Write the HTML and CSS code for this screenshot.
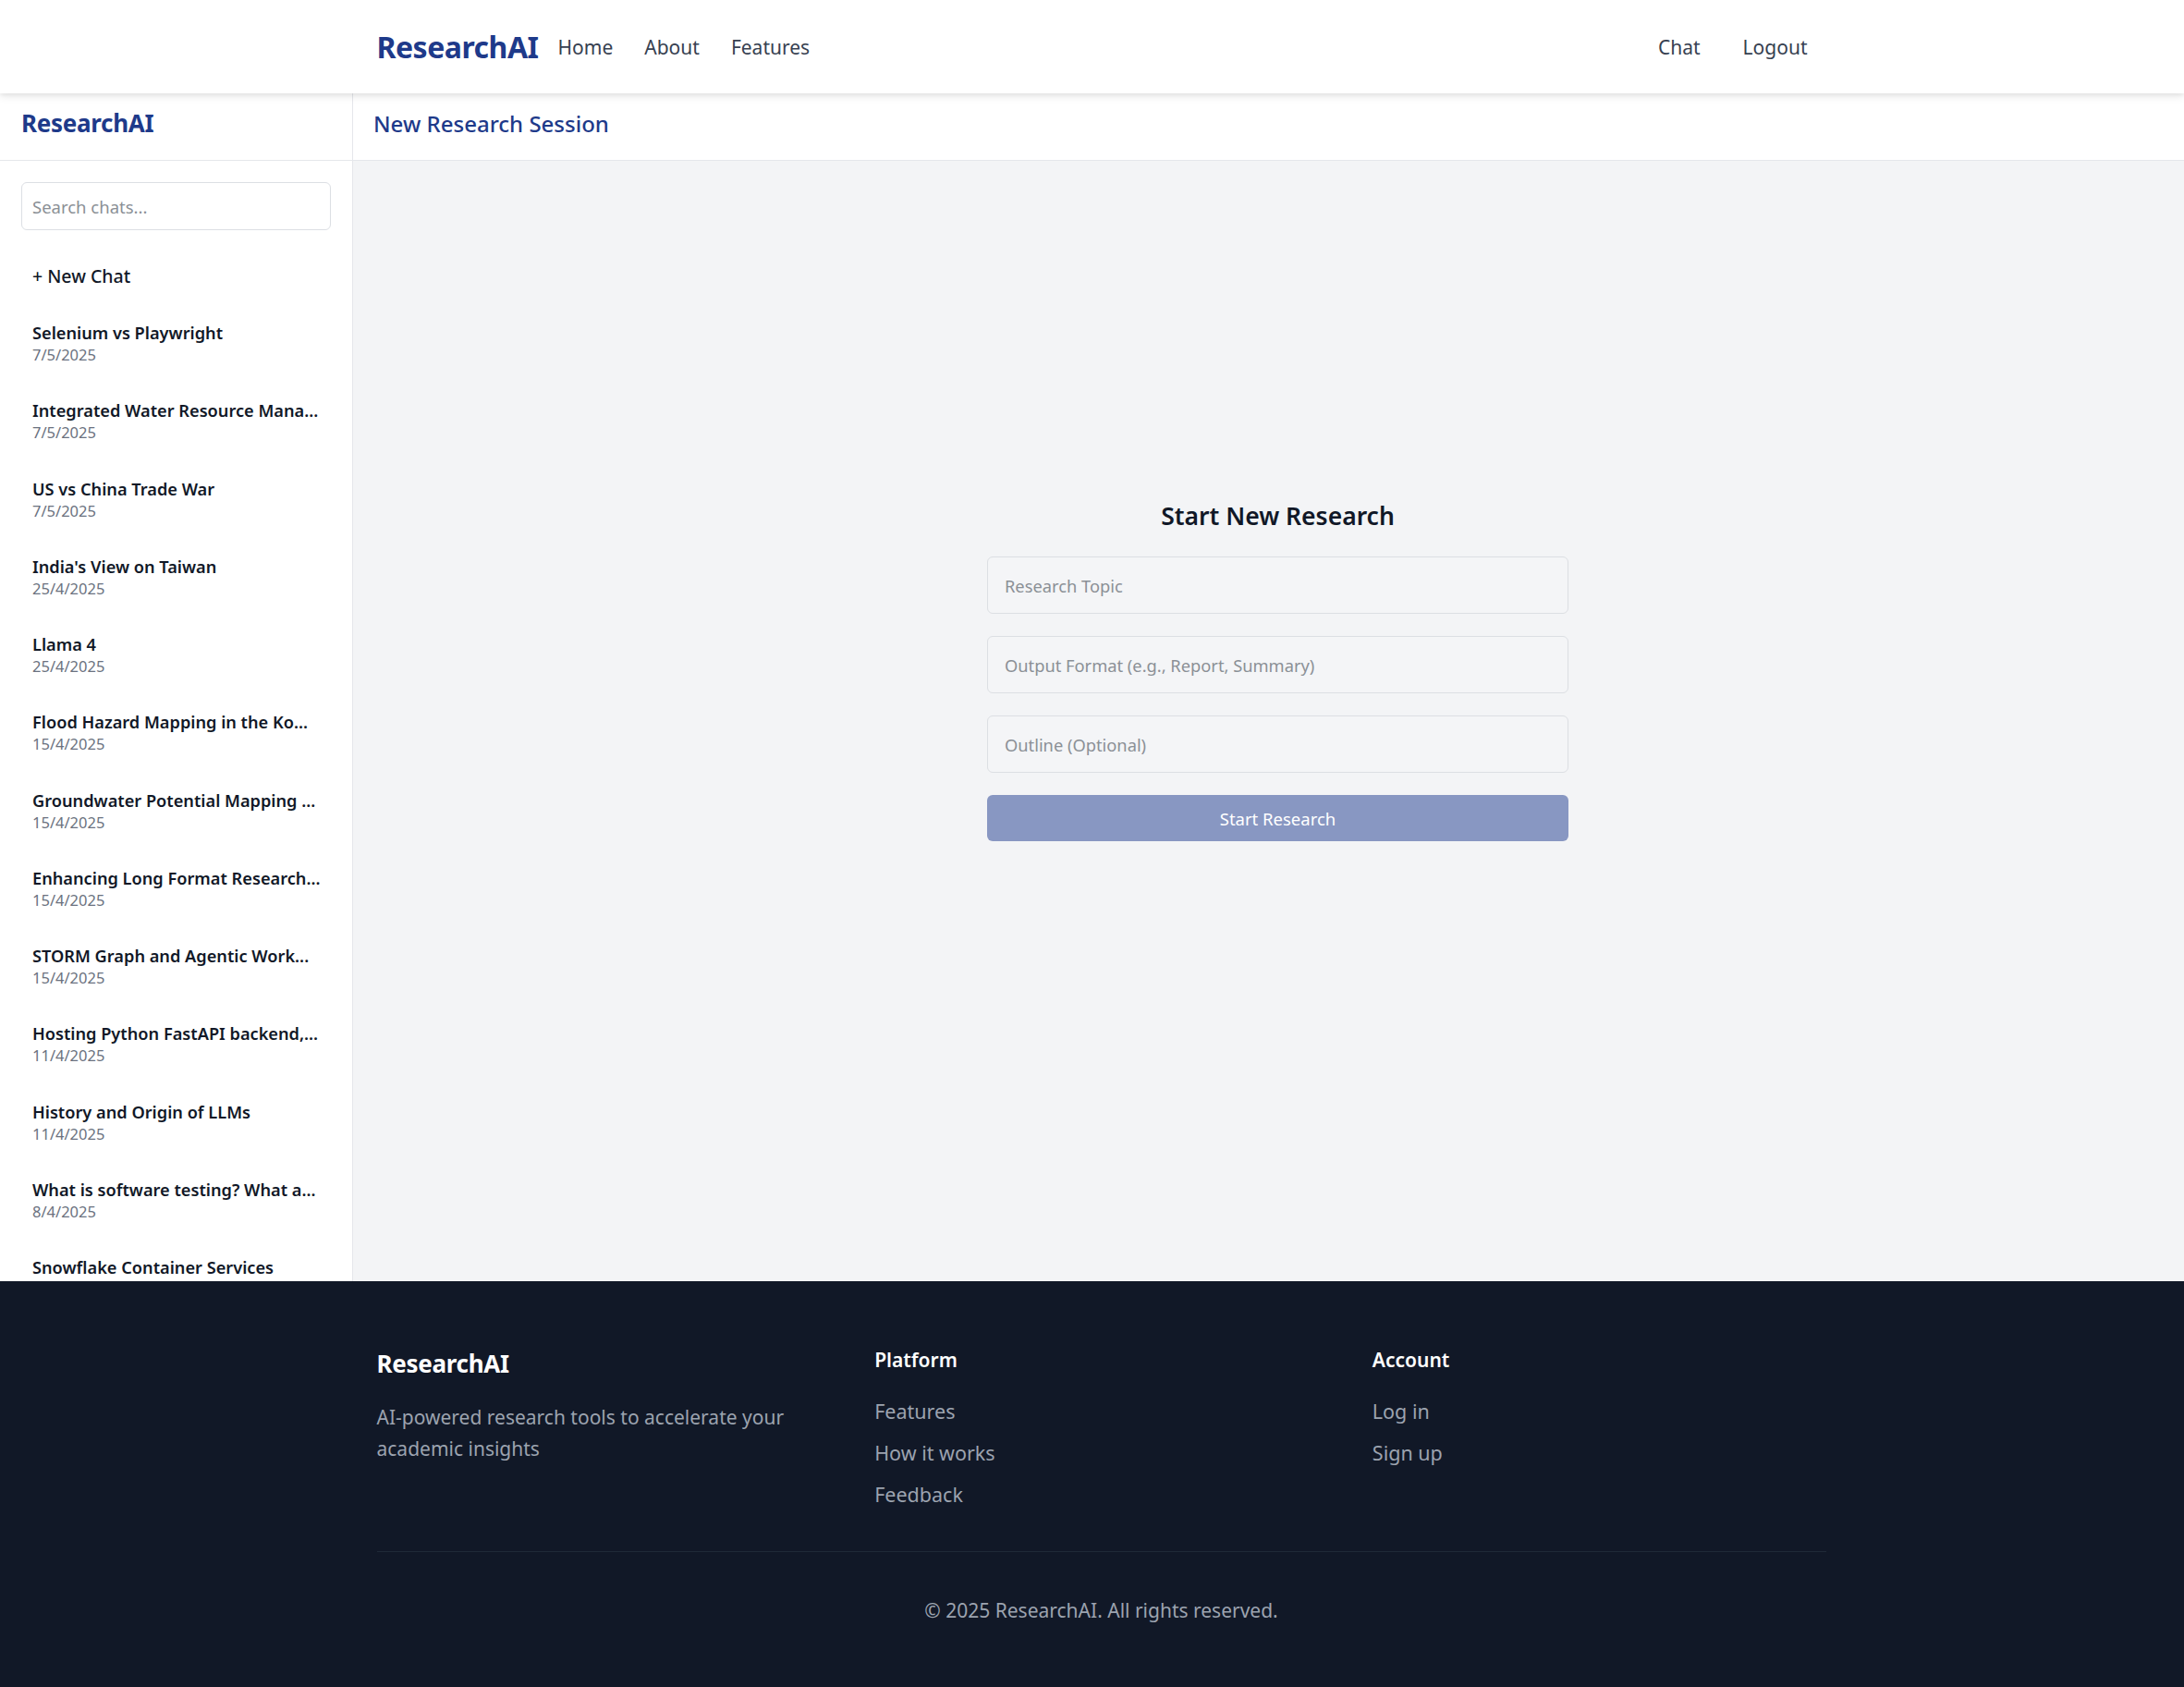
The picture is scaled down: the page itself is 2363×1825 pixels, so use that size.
FILE: index.html
```html
<!DOCTYPE html>
<html lang="en">
<head>
<meta charset="utf-8">
<title>ResearchAI</title>
<link rel="stylesheet" href="styles.css">
</head>
<body>
<nav class="topnav">
  <div class="container topnav-inner">
    <div class="nav-left">
      <a class="brand" href="#">ResearchAI</a>
      <a class="nav-link" href="#">Home</a>
      <a class="nav-link" href="#">About</a>
      <a class="nav-link" href="#">Features</a>
    </div>
    <div class="nav-right">
      <a class="nav-link" href="#">Chat</a>
      <a class="nav-link" href="#">Logout</a>
    </div>
  </div>
</nav>

<div class="app">
  <aside class="sidebar">
    <div class="sidebar-head"><span class="sidebar-brand">ResearchAI</span></div>
    <div class="sidebar-body">
      <input class="search" type="text" placeholder="Search chats...">
      <button class="new-chat" type="button">+ New Chat</button>
      <ul class="chat-list">
        <li class="chat-item"><div class="chat-title">Selenium vs Playwright</div><div class="chat-date">7/5/2025</div></li>
        <li class="chat-item"><div class="chat-title">Integrated Water Resource Mana...</div><div class="chat-date">7/5/2025</div></li>
        <li class="chat-item"><div class="chat-title">US vs China Trade War</div><div class="chat-date">7/5/2025</div></li>
        <li class="chat-item"><div class="chat-title">India's View on Taiwan</div><div class="chat-date">25/4/2025</div></li>
        <li class="chat-item"><div class="chat-title">Llama 4</div><div class="chat-date">25/4/2025</div></li>
        <li class="chat-item"><div class="chat-title">Flood Hazard Mapping in the Ko...</div><div class="chat-date">15/4/2025</div></li>
        <li class="chat-item"><div class="chat-title">Groundwater Potential Mapping ...</div><div class="chat-date">15/4/2025</div></li>
        <li class="chat-item"><div class="chat-title">Enhancing Long Format Research...</div><div class="chat-date">15/4/2025</div></li>
        <li class="chat-item"><div class="chat-title">STORM Graph and Agentic Work...</div><div class="chat-date">15/4/2025</div></li>
        <li class="chat-item"><div class="chat-title">Hosting Python FastAPI backend,...</div><div class="chat-date">11/4/2025</div></li>
        <li class="chat-item"><div class="chat-title">History and Origin of LLMs</div><div class="chat-date">11/4/2025</div></li>
        <li class="chat-item"><div class="chat-title">What is software testing? What a...</div><div class="chat-date">8/4/2025</div></li>
        <li class="chat-item"><div class="chat-title">Snowflake Container Services</div></li>
      </ul>
    </div>
  </aside>

  <main class="main">
    <header class="main-head">New Research Session</header>
    <div class="main-body">
      <form class="research-form">
        <h2 class="form-title">Start New Research</h2>
        <input class="field" type="text" placeholder="Research Topic">
        <input class="field" type="text" placeholder="Output Format (e.g., Report, Summary)">
        <input class="field" type="text" placeholder="Outline (Optional)">
        <button class="submit" type="button">Start Research</button>
      </form>
    </div>
  </main>
</div>

<footer class="footer">
  <div class="container">
    <div class="footer-grid">
      <div class="footer-col">
        <div class="footer-brand">ResearchAI</div>
        <p class="footer-desc">AI-powered research tools to accelerate your academic insights</p>
      </div>
      <div class="footer-col">
        <div class="footer-heading">Platform</div>
        <ul class="footer-links">
          <li>Features</li>
          <li>How it works</li>
          <li>Feedback</li>
        </ul>
      </div>
      <div class="footer-col">
        <div class="footer-heading">Account</div>
        <ul class="footer-links">
          <li>Log in</li>
          <li>Sign up</li>
        </ul>
      </div>
    </div>
    <div class="footer-bottom">© 2025 ResearchAI. All rights reserved.</div>
  </div>
</footer>
</body>
</html>
```

FILE: styles.css
```css
* { box-sizing: border-box; }

body {
  margin: 0;
  font-family: "Noto Sans", "Open Sans", sans-serif;
  color: #111827;
  background: #ffffff;
}

a { text-decoration: none; color: inherit; }
ul { list-style: none; margin: 0; padding: 0; }

.container {
  width: 1568px;
  margin: 0 auto;
}

/* Top navigation */
.topnav {
  position: relative;
  z-index: 2;
  height: 101px;
  padding-left: 20px;
  background: #ffffff;
  box-shadow: 0 4px 8px rgba(0, 0, 0, 0.08), 0 2px 4px rgba(0, 0, 0, 0.05);
}

.topnav-inner {
  height: 100%;
  display: flex;
  align-items: center;
  justify-content: space-between;
  padding-right: 20px;
}

.nav-left, .nav-right {
  display: flex;
  align-items: center;
}

.nav-left { gap: 34px; }
.nav-right { gap: 46px; }

.brand {
  font-size: 32px;
  font-weight: 700;
  color: #1e3a8a;
  letter-spacing: -0.5px;
  margin-right: -13px;
}

.nav-link {
  font-size: 21px;
  color: #374151;
}

/* App area */
.app {
  display: flex;
  height: 1285px;
  overflow: hidden;
}

.sidebar {
  width: 382px;
  flex-shrink: 0;
  border-right: 1px solid #e5e7eb;
  background: #ffffff;
  display: flex;
  flex-direction: column;
  overflow: hidden;
}

.sidebar-head {
  height: 73px;
  flex-shrink: 0;
  display: flex;
  align-items: center;
  padding: 0 23px 8px;
  border-bottom: 1px solid #e5e7eb;
}

.sidebar-brand {
  font-size: 26px;
  font-weight: 700;
  color: #1e3a8a;
  letter-spacing: -0.3px;
}

.sidebar-body {
  padding: 23px 23px 0;
  overflow: hidden;
}

.search {
  display: block;
  width: 100%;
  height: 52px;
  padding: 0 11px;
  border: 1px solid #dcdfe4;
  border-radius: 6px;
  font-family: inherit;
  font-size: 18.5px;
  color: #111827;
  outline: none;
}

.search::placeholder { color: #8b9096; }

.new-chat {
  display: block;
  width: 100%;
  margin-top: 22px;
  height: 54px;
  padding: 0 12px;
  border: 0;
  background: transparent;
  text-align: left;
  font-family: inherit;
  font-size: 19.5px;
  font-weight: 500;
  color: #111827;
}

.chat-list {
  margin-top: 8px;
  display: flex;
  flex-direction: column;
  gap: 8.25px;
}

.chat-item {
  padding: 14px 12px;
}

.chat-title {
  font-size: 18.2px;
  font-weight: 600;
  line-height: 26px;
  color: #111827;
  white-space: nowrap;
}

.chat-date {
  font-size: 16.5px;
  line-height: 22px;
  color: #6b7280;
}

/* Main */
.main {
  flex: 1;
  display: flex;
  flex-direction: column;
  background: #f3f4f6;
}

.main-head {
  height: 73px;
  flex-shrink: 0;
  display: flex;
  align-items: center;
  padding: 0 22px 8px;
  background: #ffffff;
  border-bottom: 1px solid #e5e7eb;
  font-size: 24px;
  font-weight: 500;
  color: #1e3a8a;
}

.main-body {
  flex: 1;
  display: flex;
  justify-content: center;
  padding-left: 20px;
  padding-top: 363px;
}

.research-form {
  width: 629px;
  display: flex;
  flex-direction: column;
}

.form-title {
  margin: 0 0 23px;
  text-align: center;
  font-size: 26.5px;
  line-height: 42px;
  font-weight: 600;
  color: #111827;
}

.field {
  height: 62px;
  margin-bottom: 24px;
  padding: 0 18px;
  border: 1px solid #dcdfe3;
  border-radius: 6px;
  background: #f4f5f7;
  font-family: inherit;
  font-size: 18.3px;
  color: #111827;
  outline: none;
}

.field::placeholder { color: #8b9096; }

.submit {
  height: 50px;
  border: 0;
  border-radius: 6px;
  background: #8897c2;
  color: #ffffff;
  font-family: inherit;
  font-size: 18.5px;
}

/* Footer */
.footer {
  background: #111827;
  padding: 71px 0 65px 20px;
}

.footer-grid {
  display: grid;
  grid-template-columns: repeat(3, 1fr);
  column-gap: 48px;
  padding-bottom: 44px;
  border-bottom: 1px solid #1f2937;
}

.footer-brand {
  font-size: 26px;
  font-weight: 700;
  line-height: 36px;
  color: #ffffff;
  letter-spacing: -0.3px;
}

.footer-desc {
  margin: 23px 0 0;
  font-size: 21px;
  line-height: 34px;
  color: #9ca3af;
}

.footer-heading {
  font-size: 21px;
  font-weight: 600;
  line-height: 28px;
  color: #ffffff;
}

.footer-links {
  margin-top: 25px;
  display: flex;
  flex-direction: column;
  gap: 11px;
}

.footer-links li {
  font-size: 21.5px;
  line-height: 34px;
  color: #9ca3af;
}

.footer-bottom {
  padding-top: 45px;
  text-align: center;
  font-size: 21px;
  line-height: 36px;
  color: #9ca3af;
}
```
